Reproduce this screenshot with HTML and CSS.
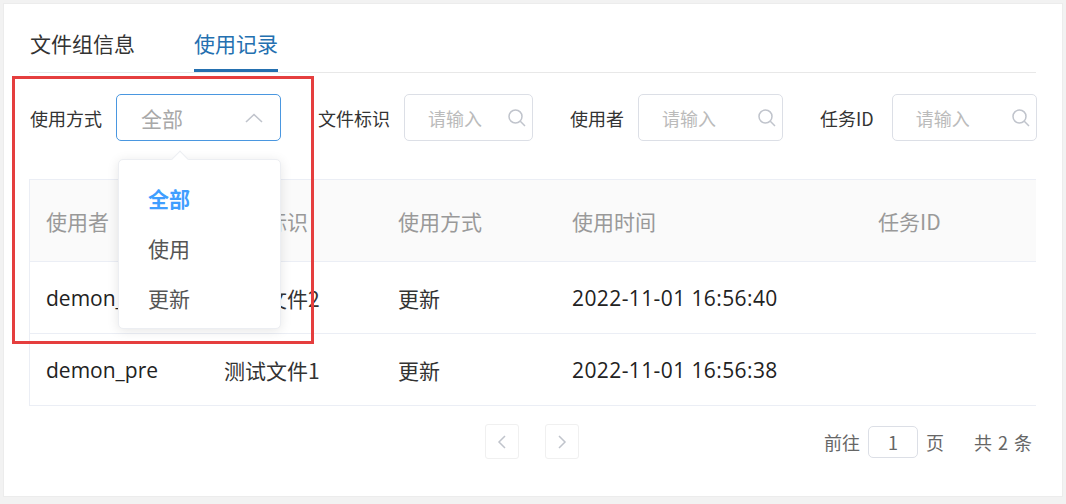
FILE: index.html
```html
<!DOCTYPE html>
<html lang="zh-CN">
<head>
<meta charset="utf-8">
<title>使用记录</title>
<link rel="stylesheet" href="styles.css">
</head>
<body>
<div class="card">
  <div class="tabs">
    <div class="tab">文件组信息</div>
    <div class="tab active">使用记录</div>
  </div>

  <div class="filters">
    <div class="field">
      <span class="label">使用方式</span>
      <div class="select">
        <span class="select-value">全部</span>
        <svg class="chev" width="18" height="10" viewBox="0 0 18 10"><path d="M1 9 L9 1.5 L17 9" fill="none" stroke="#c0c4cc" stroke-width="1.6"/></svg>
      </div>
      <div class="dropdown">
        <div class="arrow"></div>
        <div class="opt selected">全部</div>
        <div class="opt">使用</div>
        <div class="opt">更新</div>
      </div>
    </div>
    <div class="field">
      <span class="label">文件标识</span>
      <div class="input w129"><span class="ph">请输入</span><svg class="search" width="20" height="20" viewBox="0 0 20 20"><circle cx="8.5" cy="8.5" r="6.5" fill="none" stroke="#c0c4cc" stroke-width="1.5"/><path d="M13.3 13.3 L18 18" stroke="#c0c4cc" stroke-width="1.5"/></svg></div>
    </div>
    <div class="field">
      <span class="label">使用者</span>
      <div class="input w145"><span class="ph">请输入</span><svg class="search" width="20" height="20" viewBox="0 0 20 20"><circle cx="8.5" cy="8.5" r="6.5" fill="none" stroke="#c0c4cc" stroke-width="1.5"/><path d="M13.3 13.3 L18 18" stroke="#c0c4cc" stroke-width="1.5"/></svg></div>
    </div>
    <div class="field">
      <span class="label wide">任务ID</span>
      <div class="input w145"><span class="ph">请输入</span><svg class="search" width="20" height="20" viewBox="0 0 20 20"><circle cx="8.5" cy="8.5" r="6.5" fill="none" stroke="#c0c4cc" stroke-width="1.5"/><path d="M13.3 13.3 L18 18" stroke="#c0c4cc" stroke-width="1.5"/></svg></div>
    </div>
  </div>

  <div class="table">
    <div class="row head">
      <div class="cell">使用者</div>
      <div class="cell">文件标识</div>
      <div class="cell">使用方式</div>
      <div class="cell">使用时间</div>
      <div class="cell">任务ID</div>
    </div>
    <div class="row">
      <div class="cell latin">demon_pre</div>
      <div class="cell">测试文件2</div>
      <div class="cell">更新</div>
      <div class="cell latin date">2022-11-01 16:56:40</div>
      <div class="cell"></div>
    </div>
    <div class="row">
      <div class="cell latin">demon_pre</div>
      <div class="cell">测试文件1</div>
      <div class="cell">更新</div>
      <div class="cell latin date">2022-11-01 16:56:38</div>
      <div class="cell"></div>
    </div>
  </div>

  <div class="pager">
    <div class="btn"><svg width="12" height="16" viewBox="0 0 12 16"><path d="M9 2 L3 8 L9 14" fill="none" stroke="#c0c4cc" stroke-width="1.5"/></svg></div>
    <div class="btn next"><svg width="12" height="16" viewBox="0 0 12 16"><path d="M3 2 L9 8 L3 14" fill="none" stroke="#c0c4cc" stroke-width="1.5"/></svg></div>
    <div class="jumper">前往<span class="page-input">1</span>页</div>
    <div class="total">共 2 条</div>
  </div>

  <div class="highlight"></div>
</div>
</body>
</html>
```

FILE: styles.css
```css
* { box-sizing: border-box; }
html, body { margin: 0; padding: 0; }
body {
  background: #f2f2f2;
  font-family: "Noto Sans CJK SC", "Noto Sans", sans-serif;
  color: #333;
  width: 1066px;
  height: 504px;
  overflow: hidden;
}
.card {
  position: relative;
  margin: 3px 0 0 3px;
  width: 1060px;
  height: 494px;
  background: #fff;
  border: 1px solid #ececec;
  padding: 0 20px 0 25px;
}
.tabs {
  display: flex;
  gap: 59px;
  padding-top: 26px;
  border-bottom: 1px solid #e8e8e8;
  padding-left: 1px;
  margin-right: 6px;
}
.tab {
  font-size: 21px;
  line-height: 27px;
  height: 42px;
  padding-bottom: 12px;
  color: #333;
  border-bottom: 3px solid transparent;
}
.tab.active {
  color: #2470b0;
  border-bottom-color: #2470b0;
}
.filters {
  display: flex;
  align-items: center;
  gap: 37px;
  margin-top: 21px;
  padding-left: 1px;
}
.field {
  position: relative;
  display: flex;
  align-items: center;
  flex-shrink: 0;
}
.label {
  font-size: 18px;
  color: #333;
  margin-right: 14px;
  white-space: nowrap;
  flex-shrink: 0;
}
.label.wide { margin-right: 18px; }
.select {
  width: 165px;
  height: 47px;
  flex-shrink: 0;
  border: 1px solid #4a97e0;
  border-radius: 5px;
  display: flex;
  align-items: center;
  justify-content: space-between;
  padding: 0 17px 0 24px;
}
.select-value { font-size: 21px; color: #a8a8a8; }
.input {
  height: 47px;
  flex-shrink: 0;
  border: 1px solid #dcdfe6;
  border-radius: 5px;
  display: flex;
  align-items: center;
  justify-content: space-between;
  padding: 0 5px 0 23px;
}
.w129 { width: 129px; }
.w145 { width: 145px; }
.ph { font-size: 18px; color: #bbb; white-space: nowrap; }
.dropdown {
  position: absolute;
  left: 88px;
  top: 65px;
  width: 163px;
  height: 170px;
  background: #fff;
  border: 1px solid #eceef2;
  border-radius: 5px;
  box-shadow: 0 2px 12px rgba(0,0,0,0.1);
  padding: 13px 0 6px;
  z-index: 5;
}
.arrow {
  position: absolute;
  top: -7px;
  left: 55px;
  width: 12px;
  height: 12px;
  background: #fff;
  border-left: 1px solid #eceef2;
  border-top: 1px solid #eceef2;
  transform: rotate(45deg);
}
.opt {
  height: 50px;
  line-height: 50px;
  padding-left: 29px;
  font-size: 21px;
  color: #555;
}
.opt.selected { color: #409eff; font-weight: 700; }
.table {
  margin-top: 38px;
  margin-right: 6px;
  border: 1px solid #ebeef5;
  border-right: none;
  border-bottom: none;
}
.row {
  display: grid;
  grid-template-columns: 178px 174px 174px 306px 1fr;
  height: 72px;
  align-items: center;
  border-bottom: 1px solid #ebeef5;
}
.row.head {
  height: 82px;
  background: #fafafa;
}
.cell {
  padding-left: 16px;
  font-size: 21px;
  color: #333;
  white-space: nowrap;
}
.row.head .cell { color: #999; }
.latin { font-family: "Open Sans", "Noto Sans", sans-serif; color: #222; }
.date { letter-spacing: 0.4px; }
.pager {
  display: flex;
  align-items: center;
  margin-top: 18px;
  padding-left: 456px;
}
.btn {
  width: 34px;
  height: 35px;
  border: 1px solid #f0f0f0;
  border-radius: 3px;
  display: flex;
  align-items: center;
  justify-content: center;
}
.btn.next { margin-left: 26px; }
.jumper {
  margin-left: 245px;
  display: flex;
  align-items: center;
  font-size: 18px;
  color: #666;
}
.page-input {
  width: 50px;
  height: 32px;
  margin: 0 8px;
  border: 1px solid #dcdfe6;
  border-radius: 5px;
  display: flex;
  align-items: center;
  justify-content: center;
  color: #666;
}
.total {
  margin-left: 30px;
  font-size: 18px;
  color: #666;
  word-spacing: 2px;
}
.highlight {
  position: absolute;
  left: 8px;
  top: 72px;
  width: 302px;
  height: 268px;
  border: 3px solid #e53e3e;
  pointer-events: none;
  z-index: 10;
}
```
